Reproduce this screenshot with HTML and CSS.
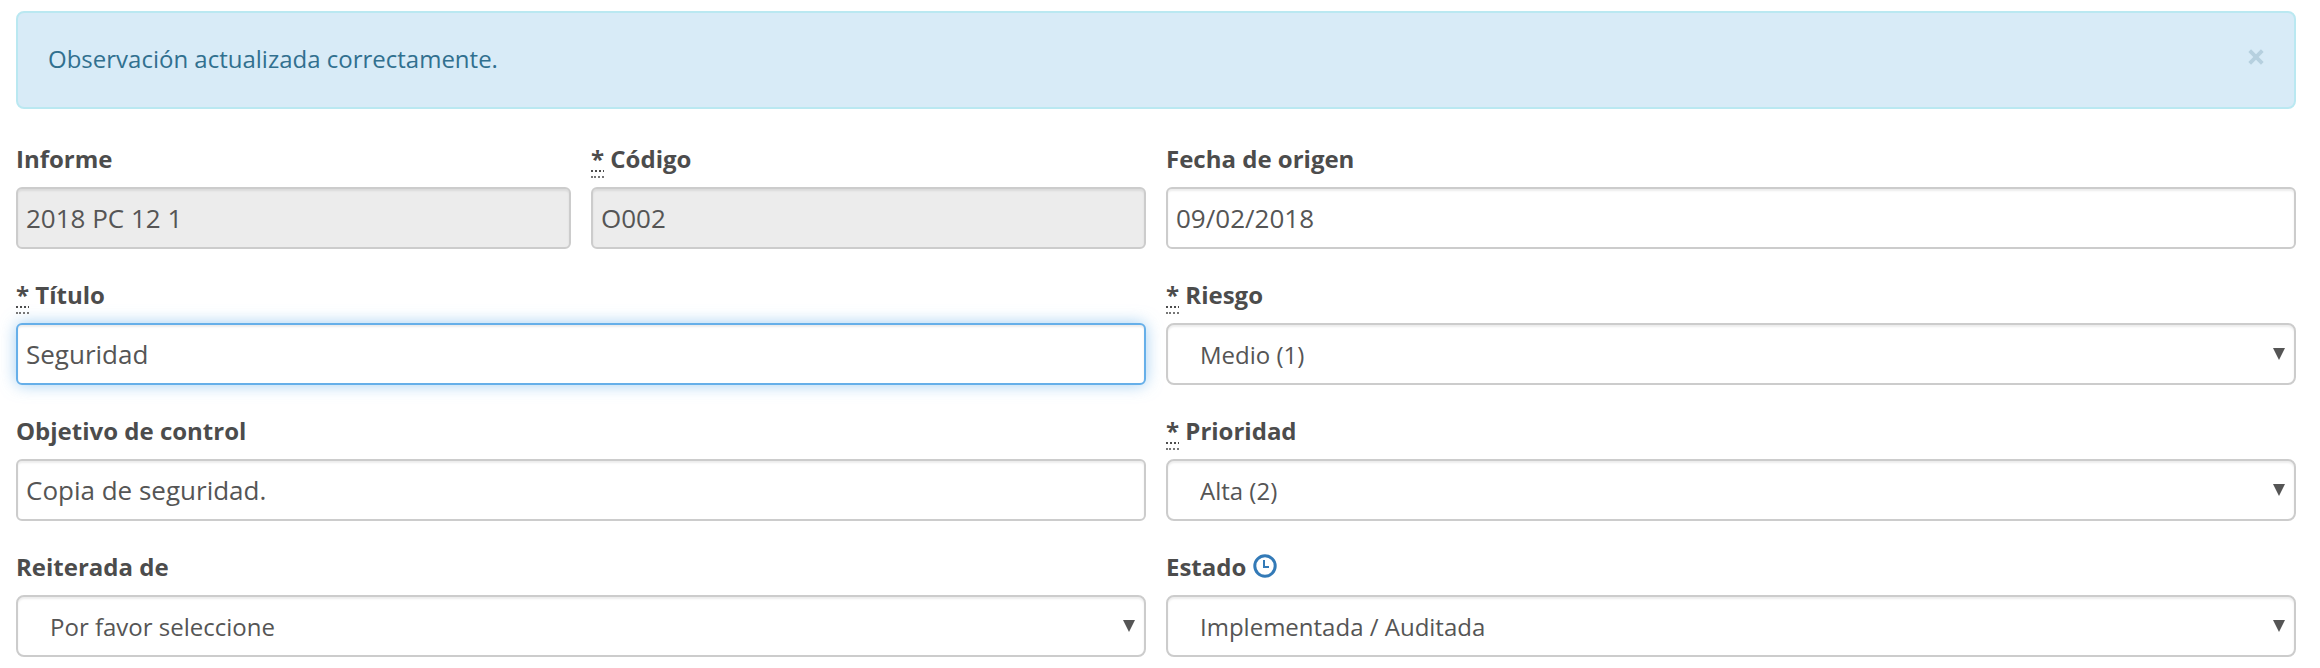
FILE: index.html
```html
<!DOCTYPE html>
<html lang="es">
<head>
<meta charset="utf-8">
<title>Observación</title>
<link rel="stylesheet" href="styles.css">
</head>
<body>
<div class="alert">
  <span>Observación actualizada correctamente.</span>
  <button class="close" type="button" aria-label="Cerrar"><svg width="16" height="16" viewBox="0 0 16 16"><path d="M1.7 1.7 14.3 14.3M14.3 1.7 1.7 14.3" stroke="#b6d0df" stroke-width="3.8"/></svg></button>
</div>
<form class="form">
  <div class="group">
    <label class="label" for="informe">Informe</label>
    <input class="control" id="informe" type="text" value="2018 PC 12 1" readonly>
  </div>
  <div class="group">
    <label class="label" for="codigo"><abbr>*</abbr> Código</label>
    <input class="control" id="codigo" type="text" value="O002" readonly>
  </div>
  <div class="group">
    <label class="label" for="fecha">Fecha de origen</label>
    <input class="control" id="fecha" type="text" value="09/02/2018">
  </div>
  <div class="group wide">
    <label class="label" for="titulo"><abbr>*</abbr> Título</label>
    <input class="control active" id="titulo" type="text" value="Seguridad">
  </div>
  <div class="group">
    <label class="label" for="riesgo"><abbr>*</abbr> Riesgo</label>
    <div class="select">
      <select class="control" id="riesgo"><option>Medio (1)</option></select>
      <svg class="arrow" width="12" height="12" viewBox="0 0 12 12"><path d="M0 0H12L6 12Z" fill="#555"/></svg>
    </div>
  </div>
  <div class="group wide">
    <label class="label" for="objetivo">Objetivo de control</label>
    <input class="control" id="objetivo" type="text" value="Copia de seguridad.">
  </div>
  <div class="group">
    <label class="label" for="prioridad"><abbr>*</abbr> Prioridad</label>
    <div class="select">
      <select class="control" id="prioridad"><option>Alta (2)</option></select>
      <svg class="arrow" width="12" height="12" viewBox="0 0 12 12"><path d="M0 0H12L6 12Z" fill="#555"/></svg>
    </div>
  </div>
  <div class="group wide">
    <label class="label" for="reiterada">Reiterada de</label>
    <div class="select">
      <select class="control" id="reiterada"><option>Por favor seleccione</option></select>
      <svg class="arrow" width="12" height="12" viewBox="0 0 12 12"><path d="M0 0H12L6 12Z" fill="#555"/></svg>
    </div>
  </div>
  <div class="group">
    <label class="label" for="estado">Estado <svg class="clock" width="24" height="24" viewBox="0 0 24 24" fill="none" stroke="#337ab7"><circle cx="12" cy="12" r="10.2" stroke-width="3"/><path d="M11 6V13H16" stroke-width="2"/></svg></label>
    <div class="select">
      <select class="control" id="estado"><option>Implementada / Auditada</option></select>
      <svg class="arrow" width="12" height="12" viewBox="0 0 12 12"><path d="M0 0H12L6 12Z" fill="#555"/></svg>
    </div>
  </div>
</form>
</body>
</html>
```
FILE: styles.css
```css
* {
  box-sizing: border-box;
}

body {
  margin: 0;
  padding: 11px 24px 0 16px;
  background: #fff;
  color: #4c4c4c;
  font: 24px/32px "Open Sans", sans-serif;
}

.alert {
  display: flex;
  justify-content: space-between;
  height: 98px;
  padding: 30px;
  border: 2px solid #bae8f1;
  border-radius: 8px;
  background: #d8ebf7;
  color: #31708f;
}

.close {
  display: block;
  width: 16px;
  height: 16px;
  margin: 6px 0 0;
  padding: 0;
  border: 0;
  background: none;
}

.close svg {
  display: block;
}

.form {
  display: grid;
  grid-template-columns: 555px 555px 1fr;
  gap: 30px 20px;
  margin-top: 34px;
}

.wide {
  grid-column: span 2;
}

.label {
  display: block;
  height: 34px;
  margin-bottom: 10px;
  font-weight: 700;
  white-space: nowrap;
}

abbr {
  padding-bottom: 1px;
  border-bottom: 2px dotted #777;
  text-decoration: underline dotted 2px;
  text-underline-offset: 2px;
}

.control {
  display: block;
  width: 100%;
  height: 62px;
  padding: 0 8px;
  border: 2px solid #ccc;
  border-radius: 6px;
  outline: 0;
  background: #fff;
  box-shadow: inset 0 2px 2px rgba(0, 0, 0, 0.075);
  color: #555;
  font: 26px/36px "Open Sans", sans-serif;
}

.control[readonly] {
  background: #ececec;
}

.control.active {
  border-color: #66afe9;
  box-shadow: inset 0 2px 2px rgba(0, 0, 0, 0.075), 0 0 16px rgba(102, 175, 233, 0.6);
}

.select {
  position: relative;
}

.select .control {
  padding: 2px 32px 0;
  border-radius: 8px;
  appearance: none;
  font-size: 24px;
}

.arrow {
  position: absolute;
  top: 25px;
  right: 11px;
}

.clock {
  vertical-align: -2px;
}
```
